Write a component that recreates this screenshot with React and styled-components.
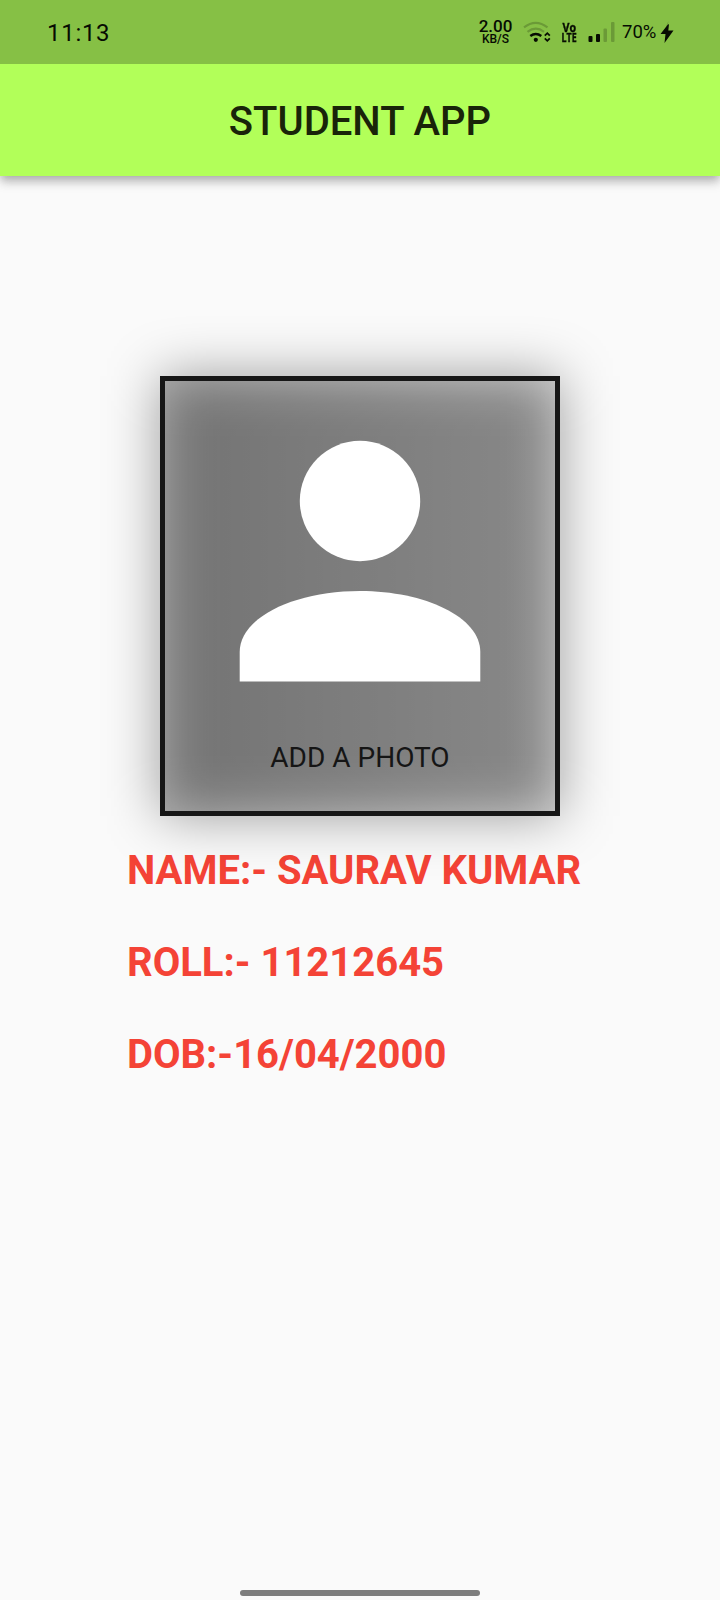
import React from "react";
import styled, { createGlobalStyle } from "styled-components";

const GlobalStyle = createGlobalStyle`
  * { box-sizing: border-box; }
  body {
    margin: 0;
    background: #fafafa;
    font-family: Roboto, sans-serif;
  }
`;

const Screen = styled.div`
  display: flex;
  flex-direction: column;
  width: 720px;
  height: 1600px;
  overflow: hidden;
  background: #fafafa;
`;

const StatusBar = styled.header`
  position: relative;
  z-index: 1;
  display: flex;
  align-items: center;
  flex: none;
  height: 64px;
  padding: 0 46px 0 47px;
  background: #86c045;
  color: #070c02;
`;

const Clock = styled.time`
  flex: 1;
  padding-top: 1px;
  font: 400 24px/28px Roboto, sans-serif;
  letter-spacing: 0.7px;
`;

const NetSpeed = styled.div`
  display: flex;
  flex-direction: column;
  align-items: center;
  width: 35px;
  margin-right: 10px;
  white-space: nowrap;
`;

const SpeedValue = styled.span`
  font: 500 17px/15px Roboto, sans-serif;
`;

const SpeedUnit = styled.span`
  font: 500 12px/11px Roboto, sans-serif;
`;

const StatusIcon = styled.svg`
  display: block;
  flex: none;
  margin-right: ${(p) => p.$gap || 0}px;
`;

const Volte = styled.div`
  display: flex;
  flex-direction: column;
  align-items: center;
  width: 16px;
  margin-right: 11px;
  font: 700 13px/10.5px "Open Sans", sans-serif;
  -webkit-text-stroke: 0.4px currentColor;
`;

const VolteLine = styled.span`
  transform: scaleX(${(p) => p.$squeeze});
`;

const Battery = styled.span`
  width: 35px;
  margin-right: 3px;
  font: 400 18.5px/24px Roboto, sans-serif;
  white-space: nowrap;
`;

const AppBar = styled.div`
  display: flex;
  align-items: center;
  justify-content: center;
  flex: none;
  height: 112px;
  padding-top: 3px;
  background: #b2ff59;
  box-shadow: 0 4px 10px rgba(0, 0, 0, 0.14), 0 8px 10px rgba(0, 0, 0, 0.1),
    0 4px 8px -2px rgba(0, 0, 0, 0.14);
`;

const Title = styled.h1`
  margin: 0;
  color: #192409;
  font-size: 40px;
  font-weight: 500;
  line-height: 47px;
`;

const Body = styled.main`
  display: flex;
  flex: 1;
  flex-direction: column;
  padding-top: 200px;
`;

const PhotoCard = styled.section`
  position: relative;
  z-index: 0;
  display: flex;
  flex-direction: column;
  align-items: center;
  align-self: center;
  width: 400px;
  height: 440px;
  padding: 5px;

  /* the shadow also shows through the translucent card face */
  &::before {
    content: "";
    position: absolute;
    inset: 0;
    z-index: -2;
    background: rgba(0, 0, 0, 0.38);
    filter: blur(27px);
  }

  &::after {
    content: "";
    position: absolute;
    inset: 0;
    z-index: -1;
    border: 5px solid #161616;
    background: linear-gradient(90deg, rgba(0, 0, 0, 0.26), rgba(0, 0, 0, 0.12)) padding-box;
  }
`;

const Avatar = styled.svg`
  display: block;
  width: 242px;
  height: 242px;
  margin-top: 59px;
`;

const PhotoLabel = styled.p`
  margin: 59px 0 0;
  color: #151515;
  font-size: 28px;
  line-height: 33px;
`;

const Details = styled.div`
  display: flex;
  flex-direction: column;
  gap: 45px;
  margin: 31px 0 0 127px;
`;

const DetailRow = styled.div`
  color: #f44336;
  font-size: 40px;
  font-weight: 700;
  line-height: 47px;
  white-space: pre;
`;

const HomeIndicator = styled.div`
  align-self: center;
  width: 240px;
  height: 6px;
  margin: auto 0 4px;
  border-radius: 3px;
  background: #7d7d7d;
`;

const details = ["NAME:- SAURAV KUMAR", "ROLL:- 11212645", "DOB:-16/04/2000"];

export default function App() {
  return (
    <Screen>
      <GlobalStyle />
      <StatusBar>
        <Clock>11:13</Clock>
        <NetSpeed>
          <SpeedValue>2.00</SpeedValue>
          <SpeedUnit>KB/S</SpeedUnit>
        </NetSpeed>
        <StatusIcon width="28" height="22" viewBox="0 0 28 22" fill="none" $gap={10}>
          <g stroke="#6b9a37" strokeWidth="2.1">
            <path d="M1 6.4Q12.7 -2.6 24.5 6.4" />
            <path d="M4.5 10.8Q12.8 4.4 21 10.8" />
          </g>
          <path d="M7.3 15Q12.8 10.8 18.3 15" stroke="#070c02" strokeWidth="2.4" />
          <circle cx="12.8" cy="18.8" r="2.1" fill="#070c02" />
          <path d="M21.8 14.6L24.3 12.2L26.8 14.6M21.8 17.4L24.3 19.8L26.8 17.4" stroke="#070c02" strokeWidth="1.8" />
        </StatusIcon>
        <Volte>
          <VolteLine $squeeze={0.82}>Vo</VolteLine>
          <VolteLine $squeeze={0.68}>LTE</VolteLine>
        </Volte>
        <StatusIcon width="27" height="22" viewBox="0 0 27 22" $gap={7}>
          <rect x="0.5" y="15" width="4" height="6" rx="1" fill="#070c02" />
          <rect x="8" y="13" width="4" height="8" rx="1" fill="#070c02" />
          <rect x="15.5" y="7.5" width="3.5" height="13.5" rx="1" fill="#6b9a37" />
          <rect x="23" y="1" width="3.5" height="20" rx="1" fill="#6b9a37" />
        </StatusIcon>
        <Battery>70%</Battery>
        <StatusIcon width="14" height="24" viewBox="0 0 14 24">
          <path d="M8.5 1L6 6.5H7.5Z" fill="#6b9a37" />
          <path d="M7.5 5L0.5 14H5.5L4.5 23L13.5 10.5H8.3L9 4Z" fill="#070c02" />
        </StatusIcon>
      </StatusBar>
      <AppBar>
        <Title>STUDENT APP</Title>
      </AppBar>
      <Body>
        <PhotoCard>
          <Avatar viewBox="0 0 242 242" fill="#fff">
            <circle cx="121" cy="61" r="60.2" />
            <path d="M.7 241.5V212C.7 177 56 151 121 151S241.3 177 241.3 212V241.5Z" />
          </Avatar>
          <PhotoLabel>ADD A PHOTO</PhotoLabel>
        </PhotoCard>
        <Details>
          {details.map((line) => (
            <DetailRow key={line}>{line}</DetailRow>
          ))}
        </Details>
        <HomeIndicator />
      </Body>
    </Screen>
  );
}
